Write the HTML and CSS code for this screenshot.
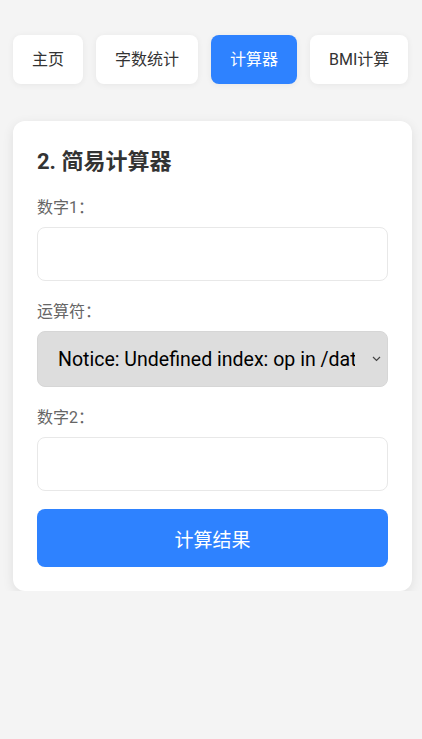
FILE: index.html
```html
<!DOCTYPE html>
<html lang="zh-CN">
<head>
	<meta charset="UTF-8">
	<title>简易计算器</title>
	<link rel="stylesheet" href="styles.css">
</head>
<body>
	<ul class="nav">
		<li><a href="javascript:;">主页</a></li>
		<li><a href="javascript:;">字数统计</a></li>
		<li><a href="javascript:;" class="active">计算器</a></li>
		<li><a href="javascript:;">BMI计算</a></li>
	</ul>
	<div class="card">
		<h2>2. 简易计算器</h2>
		<form>
			<div class="group">
				<label for="num1">数字1：</label>
				<input type="text" name="num1" id="num1">
			</div>
			<div class="group">
				<label for="op">运算符：</label>
				<div class="select-wrap">
					<select name="op" id="op">
						<option>Notice: Undefined index: op in /data/wwwroot/calc.php on line 12</option>
					</select>
					<span class="arrow"><svg width="9" height="6" viewBox="0 0 9 6"><path d="M1 1l3.5 3.5L8 1" fill="none" stroke="#444" stroke-width="1.2"/></svg></span>
				</div>
			</div>
			<div class="group">
				<label for="num2">数字2：</label>
				<input type="text" name="num2" id="num2">
			</div>
			<button type="button">计算结果</button>
		</form>
	</div>
</body>
</html>
```

FILE: styles.css
```css
* {
	margin: 0;
	padding: 0;
	box-sizing: border-box;
}
body {
	font-family: Roboto, "Noto Sans CJK SC", sans-serif;
	font-size: 16px;
	background: #f4f4f4;
	color: #333;
	padding: 35px 10px 0 13px;
}
li {
	list-style: none;
}
a {
	text-decoration: none;
	color: #333;
}
.nav {
	display: flex;
	gap: 13px;
}
.nav li a {
	display: block;
	padding: 12px 19px;
	line-height: 25px;
	background: #fff;
	border-radius: 8px;
	box-shadow: 0 1px 6px rgba(0,0,0,0.06);
}
.nav li a.active {
	background: #2e82ff;
	color: #fff;
}
.card {
	margin-top: 37px;
	background: #fff;
	border-radius: 12px;
	padding: 24px;
	box-shadow: 0 3px 12px rgba(0,0,0,0.09);
}
.card h2 {
	font-size: 22px;
	line-height: 33px;
	font-weight: bold;
	color: #333;
	margin-bottom: 18px;
}
.group {
	margin-bottom: 19px;
}
.group label {
	display: block;
	font-size: 16px;
	line-height: 24px;
	color: #666;
	margin-bottom: 7px;
}
.group input {
	display: block;
	width: 100%;
	height: 54px;
	border: 1px solid #e8e8e8;
	border-radius: 8px;
	outline: none;
	padding: 0 12px;
	font-size: 16px;
}
.select-wrap {
	position: relative;
}
.group select {
	display: block;
	width: 100%;
	height: 56px;
	appearance: none;
	-webkit-appearance: none;
	border: 1px solid #d6d6d6;
	border-radius: 8px;
	background: #ddd;
	color: #000;
	font-family: Roboto, "Noto Sans CJK SC", sans-serif;
	font-size: 19.55px;
	padding: 0 31px 0 20px;
	outline: none;
}
.select-wrap .arrow {
	position: absolute;
	right: 1px;
	top: 1px;
	bottom: 1px;
	width: 32px;
	display: flex;
	align-items: center;
	padding-left: 17px;
	background: #ddd;
	border-radius: 0 7px 7px 0;
	pointer-events: none;
}
button {
	display: block;
	width: 100%;
	height: 58px;
	margin-top: -1px;
	border: none;
	border-radius: 8px;
	background: #2e82ff;
	color: #fff;
	font-family: Roboto, "Noto Sans CJK SC", sans-serif;
	font-size: 19px;
	cursor: pointer;
}
```
